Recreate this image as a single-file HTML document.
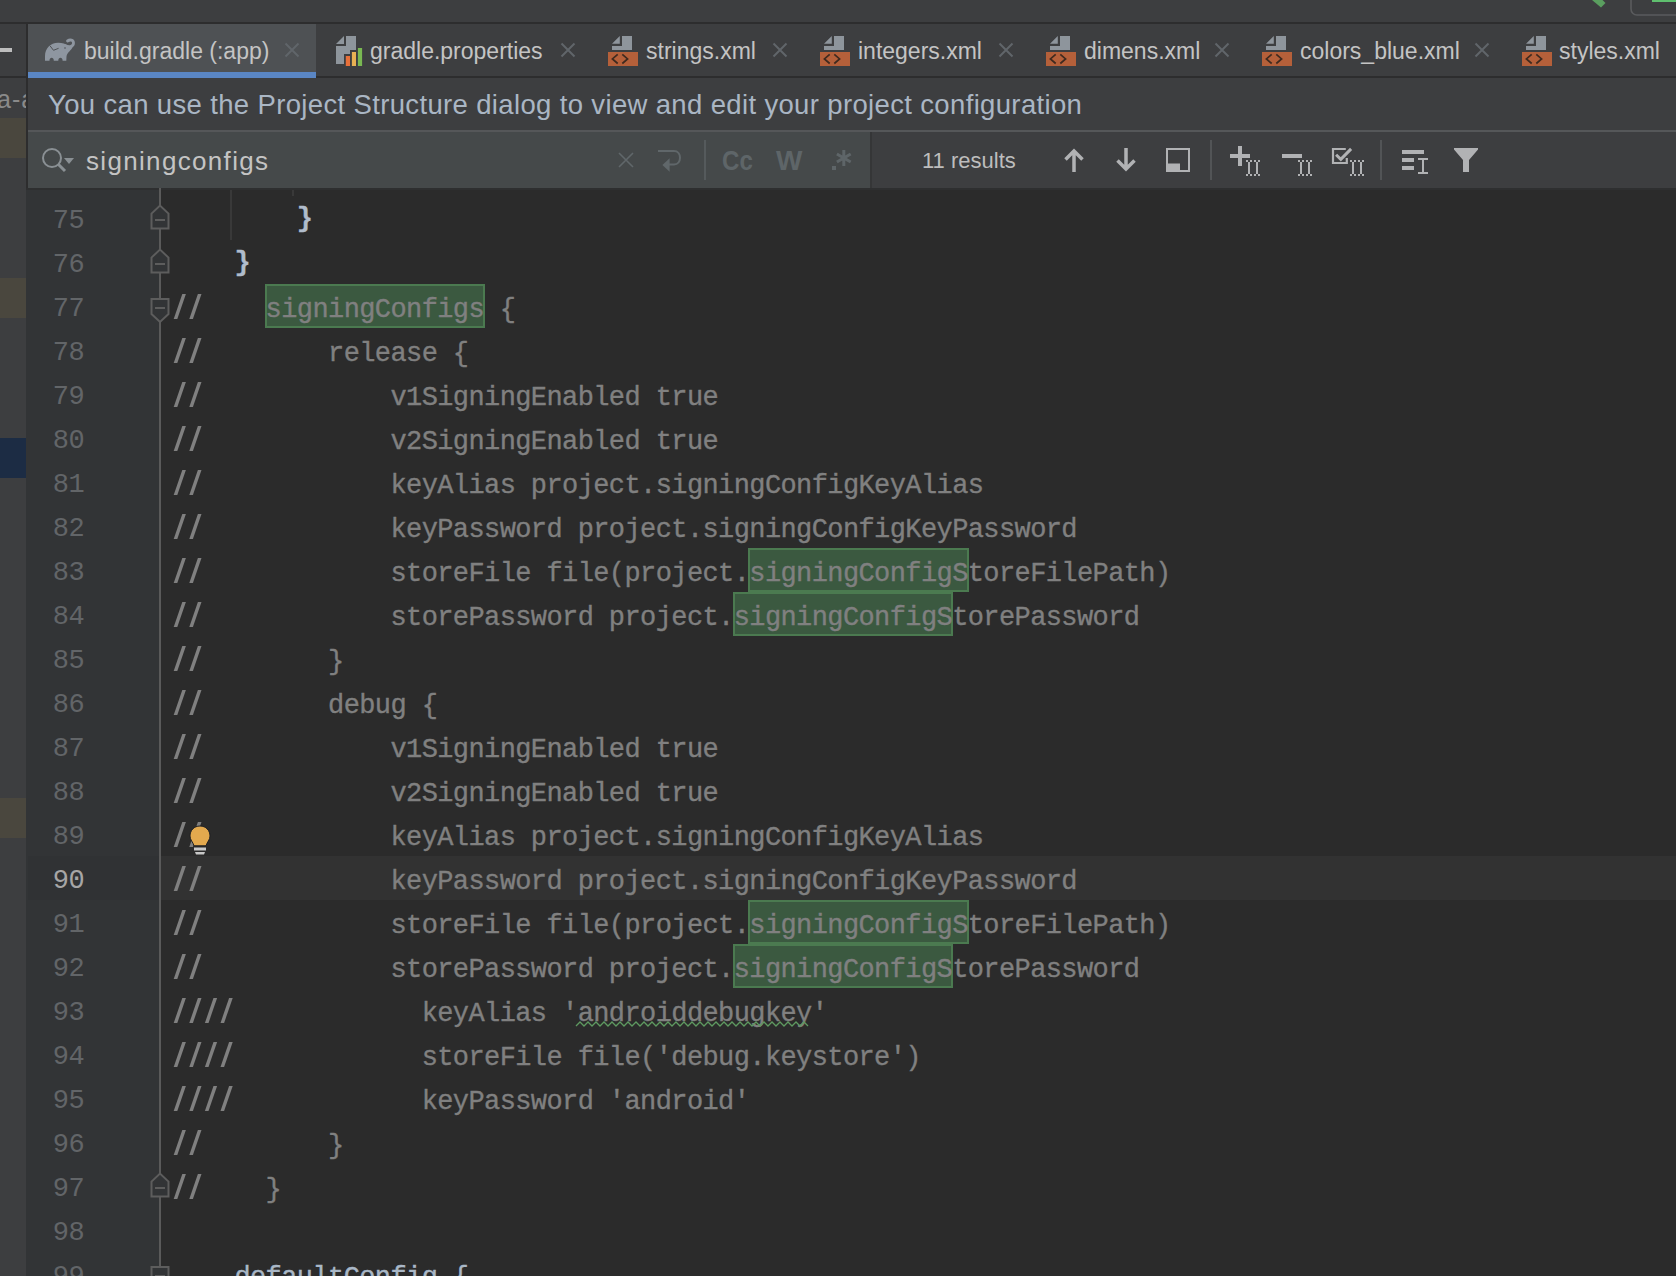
<!DOCTYPE html>
<html><head><meta charset="utf-8"><style>
*{margin:0;padding:0;box-sizing:border-box}
html,body{width:1676px;height:1276px;overflow:hidden;background:#2b2b2b;font-family:"Liberation Sans",sans-serif}
.a{position:absolute}
svg{position:absolute;overflow:visible}
.tt{position:absolute;top:37px;font-size:23px;line-height:28px;color:#c4c4c4;white-space:nowrap}
.ln{position:absolute;left:20px;width:64px;text-align:right;font-family:"Liberation Mono",monospace;font-size:27px;letter-spacing:-0.6px;line-height:44px;color:#626568;padding-top:3px;height:44px}
.ln.cur{color:#a6a6a6}
.code{position:absolute;left:172px;font-family:"Liberation Mono",monospace;font-size:27px;letter-spacing:-0.6px;line-height:44px;white-space:pre;color:#808080;padding-top:4px;height:44px;-webkit-text-stroke:0.35px currentColor}
.code.brace{color:#b0bccb;font-weight:bold;padding-top:1px}
.code.d{color:#a9b7c6}
.hl{position:absolute;height:44px;background:#3b5940;border:2px solid #4b7a50}
</style></head><body>
<div class="a" style="left:0px;top:0px;width:1676px;height:22px;background:#3d3e40;"></div>
<div class="a" style="left:0px;top:22px;width:1676px;height:2px;background:#2d2d2e;"></div>
<svg style="left:0;top:0" width="1676" height="24"><polygon points="1592,0 1601,7.5 1605.5,3 1602.5,0" fill="#5a9e5f"/><rect x="1631" y="-10" width="60" height="25" rx="6" fill="none" stroke="#5a5b5d" stroke-width="1.6"/><rect x="1652" y="-2" width="30" height="4" fill="#5fbf6f"/></svg>
<div class="a" style="left:0px;top:24px;width:26px;height:1252px;background:#3d3e40;"></div>
<div class="a" style="left:0px;top:76px;width:26px;height:2px;background:#2d2d2e;"></div>
<div class="a" style="left:0px;top:48px;width:12px;height:4px;background:#bdbdbd;"></div>
<div class="a" style="left:-3px;top:84px;font-size:25px;line-height:30px;color:#8a8a8a;white-space:nowrap;letter-spacing:1px">a-a</div>
<div class="a" style="left:0px;top:118px;width:26px;height:40px;background:#4a473e;"></div>
<div class="a" style="left:0px;top:278px;width:26px;height:40px;background:#4a473e;"></div>
<div class="a" style="left:0px;top:438px;width:26px;height:40px;background:#1c2c44;"></div>
<div class="a" style="left:0px;top:798px;width:26px;height:40px;background:#4a473e;"></div>
<div class="a" style="left:26px;top:24px;width:2px;height:164px;background:#2d2d2e;"></div>
<div class="a" style="left:28px;top:24px;width:1648px;height:52px;background:#3d3e40;"></div>
<div class="a" style="left:28px;top:76px;width:1648px;height:2px;background:#2d2d2e;"></div>
<div class="a" style="left:28px;top:24px;width:288px;height:54px;background:#4e5154;"></div>
<div class="a" style="left:28px;top:72px;width:288px;height:6px;background:#5a86c4;"></div>
<div class="tt" style="left:84px">build.gradle (:app)</div>
<div class="tt" style="left:370px">gradle.properties</div>
<div class="tt" style="left:646px">strings.xml</div>
<div class="tt" style="left:858px">integers.xml</div>
<div class="tt" style="left:1084px">dimens.xml</div>
<div class="tt" style="left:1300px">colors_blue.xml</div>
<div class="tt" style="left:1559px">styles.xml</div>
<svg style="left:284px;top:42px" width="16" height="16"><path d="M1.5,1.5 L14.5,14.5 M14.5,1.5 L1.5,14.5" stroke="#60656a" stroke-width="2" fill="none"/></svg>
<svg style="left:559.5px;top:42px" width="16" height="16"><path d="M1.5,1.5 L14.5,14.5 M14.5,1.5 L1.5,14.5" stroke="#60656a" stroke-width="2" fill="none"/></svg>
<svg style="left:772px;top:42px" width="16" height="16"><path d="M1.5,1.5 L14.5,14.5 M14.5,1.5 L1.5,14.5" stroke="#60656a" stroke-width="2" fill="none"/></svg>
<svg style="left:998px;top:42px" width="16" height="16"><path d="M1.5,1.5 L14.5,14.5 M14.5,1.5 L1.5,14.5" stroke="#60656a" stroke-width="2" fill="none"/></svg>
<svg style="left:1214px;top:42px" width="16" height="16"><path d="M1.5,1.5 L14.5,14.5 M14.5,1.5 L1.5,14.5" stroke="#60656a" stroke-width="2" fill="none"/></svg>
<svg style="left:1474px;top:42px" width="16" height="16"><path d="M1.5,1.5 L14.5,14.5 M14.5,1.5 L1.5,14.5" stroke="#60656a" stroke-width="2" fill="none"/></svg>
<svg style="left:40px;top:34px" width="40" height="32"><path fill="#8e96a0" d="M5,26.8 L5,22 C5,14.5 10.5,9 18,8.8 C22,8.7 25.5,10 28,11.8 L32.8,12.6 C31.5,16.5 27,18.5 26.5,22.5 L26.3,26.8 L22.6,26.8 C22.6,24.6 21.6,23.8 20.45,23.8 C19.3,23.8 18.3,24.6 18.3,26.8 L13.8,26.8 C13.8,24.6 12.8,23.8 11.65,23.8 C10.5,23.8 9.5,24.6 9.5,26.8 Z"/><path d="M25,11.5 C29.5,13.5 33.5,12.5 33.5,9 C33.5,5.8 30,5.2 27.5,7" stroke="#8e96a0" stroke-width="2.8" fill="none" stroke-linecap="round"/><path d="M10,11.8 L13.5,16.3 L18.6,14.3" stroke="#4e5154" stroke-width="1" fill="none"/><circle cx="25" cy="14" r="0.8" fill="#4e5154"/></svg>
<svg style="left:330px;top:30px" width="40" height="40"><path fill="#8e959c" d="M6,14 L14,6 L14,14 Z M16,6 L26,6 L26,20 L20,20 L20,24 L14,24 L14,34 L6,34 L6,16 L16,16 Z"/><rect x="15.8" y="26" width="4.2" height="10" fill="#e8703a"/><rect x="21.9" y="22" width="4.1" height="14" fill="#e8b153"/><rect x="27.9" y="18" width="4.2" height="18" fill="#79b852"/></svg>
<svg style="left:604px;top:32px" width="40" height="40"><path fill="#8e959c" d="M8,11.8 L15.8,4 L15.8,11.8 Z M18,4 L28,4 L28,18 L8,18 L8,14 L18,14 Z"/><rect x="4" y="20" width="30" height="14" fill="#b5603a"/><path d="M13.7,22.3 L8.4,26.9 L13.7,31.5 M18.3,22.3 L23.6,26.9 L18.3,31.5" stroke="#3f2a1f" stroke-width="1.7" fill="none"/></svg>
<svg style="left:816px;top:32px" width="40" height="40"><path fill="#8e959c" d="M8,11.8 L15.8,4 L15.8,11.8 Z M18,4 L28,4 L28,18 L8,18 L8,14 L18,14 Z"/><rect x="4" y="20" width="30" height="14" fill="#b5603a"/><path d="M13.7,22.3 L8.4,26.9 L13.7,31.5 M18.3,22.3 L23.6,26.9 L18.3,31.5" stroke="#3f2a1f" stroke-width="1.7" fill="none"/></svg>
<svg style="left:1042px;top:32px" width="40" height="40"><path fill="#8e959c" d="M8,11.8 L15.8,4 L15.8,11.8 Z M18,4 L28,4 L28,18 L8,18 L8,14 L18,14 Z"/><rect x="4" y="20" width="30" height="14" fill="#b5603a"/><path d="M13.7,22.3 L8.4,26.9 L13.7,31.5 M18.3,22.3 L23.6,26.9 L18.3,31.5" stroke="#3f2a1f" stroke-width="1.7" fill="none"/></svg>
<svg style="left:1258px;top:32px" width="40" height="40"><path fill="#8e959c" d="M8,11.8 L15.8,4 L15.8,11.8 Z M18,4 L28,4 L28,18 L8,18 L8,14 L18,14 Z"/><rect x="4" y="20" width="30" height="14" fill="#b5603a"/><path d="M13.7,22.3 L8.4,26.9 L13.7,31.5 M18.3,22.3 L23.6,26.9 L18.3,31.5" stroke="#3f2a1f" stroke-width="1.7" fill="none"/></svg>
<svg style="left:1518px;top:32px" width="40" height="40"><path fill="#8e959c" d="M8,11.8 L15.8,4 L15.8,11.8 Z M18,4 L28,4 L28,18 L8,18 L8,14 L18,14 Z"/><rect x="4" y="20" width="30" height="14" fill="#b5603a"/><path d="M13.7,22.3 L8.4,26.9 L13.7,31.5 M18.3,22.3 L23.6,26.9 L18.3,31.5" stroke="#3f2a1f" stroke-width="1.7" fill="none"/></svg>
<div class="a" style="left:28px;top:78px;width:1648px;height:52px;background:#3d3e40;"></div>
<div class="a" style="left:48px;top:89px;font-size:27.5px;line-height:32px;color:#aab6c4;letter-spacing:0.35px;white-space:nowrap">You can use the Project Structure dialog to view and edit your project configuration</div>
<div class="a" style="left:28px;top:130px;width:1648px;height:2px;background:#555759;"></div>
<div class="a" style="left:28px;top:132px;width:842px;height:56px;background:#45494a;"></div>
<div class="a" style="left:870px;top:132px;width:2px;height:56px;background:#353637;"></div>
<div class="a" style="left:872px;top:132px;width:804px;height:56px;background:#3d3e40;"></div>
<svg style="left:28px;top:132px" width="60" height="56"><circle cx="24" cy="26" r="9" stroke="#8a9094" stroke-width="2" fill="none"/><path d="M30.5,32.5 L37,39" stroke="#8a9094" stroke-width="3" fill="none"/><path d="M36,26 L46,26 L41,32 Z" fill="#8a9094"/></svg>
<div class="a" style="left:86px;top:145px;font-size:26px;line-height:32px;color:#c4c4c4;letter-spacing:1.33px;white-space:nowrap">signingconfigs</div>
<svg style="left:610px;top:140px" width="80" height="40"><path d="M9,13 L23,27 M23,13 L9,27" stroke="#60676a" stroke-width="1.6" fill="none"/><path d="M48,11 L64,11 C72,11 72,24.5 64,24.5 L59,24.5" stroke="#60676a" stroke-width="2" fill="none"/><path d="M59.6,18.3 L52.4,25 L59.6,31.7 Z" fill="#60676a"/></svg>
<div class="a" style="left:704px;top:140px;width:2px;height:40px;background:#555a5c;"></div>
<div class="a" style="left:722px;top:146px;font-size:28px;line-height:30px;font-weight:bold;color:#5e6568;white-space:nowrap;transform:scaleX(0.86);transform-origin:0 0">Cc</div>
<div class="a" style="left:776px;top:146px;font-size:28px;line-height:30px;font-weight:bold;color:#5e6568;white-space:nowrap">W</div>
<svg style="left:820px;top:140px" width="40" height="40"><rect x="12" y="26" width="4" height="4" fill="#5e6568"/><path d="M23.8,10 L23.8,26 M16.9,14 L30.7,22 M16.9,22 L30.7,14" stroke="#5e6568" stroke-width="3" fill="none"/></svg>
<div class="a" style="left:922px;top:147px;font-size:22px;line-height:28px;color:#bdbdbd;white-space:nowrap">11 results</div>
<svg style="left:1050px;top:140px" width="160" height="40"><path d="M24,11 L24,32 M15.5,19.5 L24,11 L32.5,19.5" stroke="#b1b2b4" stroke-width="3.5" fill="none"/><path d="M76,8 L76,29 M67.5,20.5 L76,29 L84.5,20.5" stroke="#b1b2b4" stroke-width="3.5" fill="none"/><rect x="117" y="9" width="22" height="22" stroke="#b1b2b4" stroke-width="2" fill="none"/><rect x="117" y="23.5" width="13" height="7.5" fill="#b1b2b4"/></svg>
<div class="a" style="left:1210px;top:140px;width:2px;height:40px;background:#525456;"></div>
<svg style="left:1200px;top:128px" width="300" height="64"><path d="M30,28 L50,28 M40,18 L40,38" stroke="#b1b2b4" stroke-width="4" fill="none"/><rect x="46" y="32" width="2" height="2" fill="#b1b2b4"/><rect x="46" y="46" width="2" height="2" fill="#b1b2b4"/><rect x="50" y="32" width="2" height="2" fill="#b1b2b4"/><rect x="50" y="46" width="2" height="2" fill="#b1b2b4"/><rect x="48" y="34" width="2" height="12" fill="#b1b2b4"/><rect x="54" y="32" width="2" height="2" fill="#b1b2b4"/><rect x="54" y="46" width="2" height="2" fill="#b1b2b4"/><rect x="58" y="32" width="2" height="2" fill="#b1b2b4"/><rect x="58" y="46" width="2" height="2" fill="#b1b2b4"/><rect x="56" y="34" width="2" height="12" fill="#b1b2b4"/><path d="M82,28 L102,28" stroke="#b1b2b4" stroke-width="4" fill="none"/><rect x="98" y="32" width="2" height="2" fill="#b1b2b4"/><rect x="98" y="46" width="2" height="2" fill="#b1b2b4"/><rect x="102" y="32" width="2" height="2" fill="#b1b2b4"/><rect x="102" y="46" width="2" height="2" fill="#b1b2b4"/><rect x="100" y="34" width="2" height="12" fill="#b1b2b4"/><rect x="106" y="32" width="2" height="2" fill="#b1b2b4"/><rect x="106" y="46" width="2" height="2" fill="#b1b2b4"/><rect x="110" y="32" width="2" height="2" fill="#b1b2b4"/><rect x="110" y="46" width="2" height="2" fill="#b1b2b4"/><rect x="108" y="34" width="2" height="12" fill="#b1b2b4"/><path d="M145.8,21 L133,21 L133,35 L146.8,35 L146.8,30" stroke="#b1b2b4" stroke-width="2.2" fill="none"/><path d="M136.1,26.7 L140.8,31.3 L151.1,20.9" stroke="#b1b2b4" stroke-width="3" fill="none"/><rect x="150" y="32" width="2" height="2" fill="#b1b2b4"/><rect x="150" y="46" width="2" height="2" fill="#b1b2b4"/><rect x="154" y="32" width="2" height="2" fill="#b1b2b4"/><rect x="154" y="46" width="2" height="2" fill="#b1b2b4"/><rect x="152" y="34" width="2" height="12" fill="#b1b2b4"/><rect x="158" y="32" width="2" height="2" fill="#b1b2b4"/><rect x="158" y="46" width="2" height="2" fill="#b1b2b4"/><rect x="162" y="32" width="2" height="2" fill="#b1b2b4"/><rect x="162" y="46" width="2" height="2" fill="#b1b2b4"/><rect x="160" y="34" width="2" height="12" fill="#b1b2b4"/><rect x="202" y="22" width="22" height="4" fill="#b1b2b4"/><rect x="202" y="30" width="12" height="4" fill="#b1b2b4"/><rect x="202" y="38" width="12" height="4" fill="#b1b2b4"/><rect x="218" y="30" width="10" height="2" fill="#b1b2b4"/><rect x="222" y="32" width="2" height="12" fill="#b1b2b4"/><rect x="218" y="44" width="10" height="2" fill="#b1b2b4"/><path d="M254,20 L278,20 L278,21.5 L269,32 L269,44 L263,44 L263,32 L254,21.5 Z" fill="#b1b2b4"/></svg>
<div class="a" style="left:1380px;top:140px;width:2px;height:40px;background:#525456;"></div>
<div class="a" style="left:26px;top:188px;width:135px;height:1088px;background:#323436;"></div>
<div class="a" style="left:161px;top:188px;width:1515px;height:1088px;background:#2b2b2b;"></div>
<div class="a" style="left:26px;top:188px;width:1650px;height:2px;background:#2e2f30;"></div>
<div class="a" style="left:28px;top:856px;width:133px;height:44px;background:#303234;"></div>
<div class="a" style="left:161px;top:856px;width:1515px;height:44px;background:#323232;"></div>
<div class="a" style="left:230px;top:190px;width:2px;height:50px;background:#393939;"></div>
<div class="a" style="left:292px;top:190px;width:2px;height:6px;background:#393939;"></div>
<div class="a" style="left:159px;top:188px;width:2px;height:1088px;background:#5a5a5a;"></div>
<div class="ln" style="top:196px">75</div>
<div class="code brace" style="top:196px">        }</div>
<div class="ln" style="top:240px">76</div>
<div class="code brace" style="top:240px">    }</div>
<div class="ln" style="top:284px">77</div>
<div class="hl" style="top:284px;left:264.6px;width:220.4px"></div>
<div class="code c" style="top:284px">      signingConfigs {</div>
<div class="ln" style="top:328px">78</div>
<div class="code c" style="top:328px">          release {</div>
<div class="ln" style="top:372px">79</div>
<div class="code c" style="top:372px">              v1SigningEnabled true</div>
<div class="ln" style="top:416px">80</div>
<div class="code c" style="top:416px">              v2SigningEnabled true</div>
<div class="ln" style="top:460px">81</div>
<div class="code c" style="top:460px">              keyAlias project.signingConfigKeyAlias</div>
<div class="ln" style="top:504px">82</div>
<div class="code c" style="top:504px">              keyPassword project.signingConfigKeyPassword</div>
<div class="ln" style="top:548px">83</div>
<div class="hl" style="top:548px;left:748.2px;width:220.4px"></div>
<div class="code c" style="top:548px">              storeFile file(project.signingConfigStoreFilePath)</div>
<div class="ln" style="top:592px">84</div>
<div class="hl" style="top:592px;left:732.6px;width:220.4px"></div>
<div class="code c" style="top:592px">              storePassword project.signingConfigStorePassword</div>
<div class="ln" style="top:636px">85</div>
<div class="code c" style="top:636px">          }</div>
<div class="ln" style="top:680px">86</div>
<div class="code c" style="top:680px">          debug {</div>
<div class="ln" style="top:724px">87</div>
<div class="code c" style="top:724px">              v1SigningEnabled true</div>
<div class="ln" style="top:768px">88</div>
<div class="code c" style="top:768px">              v2SigningEnabled true</div>
<div class="ln" style="top:812px">89</div>
<div class="code c" style="top:812px">              keyAlias project.signingConfigKeyAlias</div>
<div class="ln cur" style="top:856px">90</div>
<div class="code c" style="top:856px">              keyPassword project.signingConfigKeyPassword</div>
<div class="ln" style="top:900px">91</div>
<div class="hl" style="top:900px;left:748.2px;width:220.4px"></div>
<div class="code c" style="top:900px">              storeFile file(project.signingConfigStoreFilePath)</div>
<div class="ln" style="top:944px">92</div>
<div class="hl" style="top:944px;left:732.6px;width:220.4px"></div>
<div class="code c" style="top:944px">              storePassword project.signingConfigStorePassword</div>
<div class="ln" style="top:988px">93</div>
<div class="code c" style="top:988px">                keyAlias &#x27;androiddebugkey&#x27;</div>
<div class="ln" style="top:1032px">94</div>
<div class="code c" style="top:1032px">                storeFile file(&#x27;debug.keystore&#x27;)</div>
<div class="ln" style="top:1076px">95</div>
<div class="code c" style="top:1076px">                keyPassword &#x27;android&#x27;</div>
<div class="ln" style="top:1120px">96</div>
<div class="code c" style="top:1120px">          }</div>
<div class="ln" style="top:1164px">97</div>
<div class="code c" style="top:1164px">      }</div>
<div class="ln" style="top:1208px">98</div>
<div class="code c" style="top:1208px"></div>
<div class="ln" style="top:1252px">99</div>
<div class="code d" style="top:1252px">    defaultConfig {</div>
<svg style="left:0;top:0" width="1676" height="1276" fill="#808080"><polygon points="173.7,319 177.3,319 185.9,294 182.3,294"/><polygon points="189.3,319 192.9,319 201.5,294 197.9,294"/><polygon points="173.7,363 177.3,363 185.9,338 182.3,338"/><polygon points="189.3,363 192.9,363 201.5,338 197.9,338"/><polygon points="173.7,407 177.3,407 185.9,382 182.3,382"/><polygon points="189.3,407 192.9,407 201.5,382 197.9,382"/><polygon points="173.7,451 177.3,451 185.9,426 182.3,426"/><polygon points="189.3,451 192.9,451 201.5,426 197.9,426"/><polygon points="173.7,495 177.3,495 185.9,470 182.3,470"/><polygon points="189.3,495 192.9,495 201.5,470 197.9,470"/><polygon points="173.7,539 177.3,539 185.9,514 182.3,514"/><polygon points="189.3,539 192.9,539 201.5,514 197.9,514"/><polygon points="173.7,583 177.3,583 185.9,558 182.3,558"/><polygon points="189.3,583 192.9,583 201.5,558 197.9,558"/><polygon points="173.7,627 177.3,627 185.9,602 182.3,602"/><polygon points="189.3,627 192.9,627 201.5,602 197.9,602"/><polygon points="173.7,671 177.3,671 185.9,646 182.3,646"/><polygon points="189.3,671 192.9,671 201.5,646 197.9,646"/><polygon points="173.7,715 177.3,715 185.9,690 182.3,690"/><polygon points="189.3,715 192.9,715 201.5,690 197.9,690"/><polygon points="173.7,759 177.3,759 185.9,734 182.3,734"/><polygon points="189.3,759 192.9,759 201.5,734 197.9,734"/><polygon points="173.7,803 177.3,803 185.9,778 182.3,778"/><polygon points="189.3,803 192.9,803 201.5,778 197.9,778"/><polygon points="173.7,847 177.3,847 185.9,822 182.3,822"/><polygon points="189.3,847 192.9,847 201.5,822 197.9,822"/><polygon points="173.7,891 177.3,891 185.9,866 182.3,866"/><polygon points="189.3,891 192.9,891 201.5,866 197.9,866"/><polygon points="173.7,935 177.3,935 185.9,910 182.3,910"/><polygon points="189.3,935 192.9,935 201.5,910 197.9,910"/><polygon points="173.7,979 177.3,979 185.9,954 182.3,954"/><polygon points="189.3,979 192.9,979 201.5,954 197.9,954"/><polygon points="173.7,1023 177.3,1023 185.9,998 182.3,998"/><polygon points="189.3,1023 192.9,1023 201.5,998 197.9,998"/><polygon points="204.9,1023 208.5,1023 217.1,998 213.5,998"/><polygon points="220.5,1023 224.1,1023 232.7,998 229.1,998"/><polygon points="173.7,1067 177.3,1067 185.9,1042 182.3,1042"/><polygon points="189.3,1067 192.9,1067 201.5,1042 197.9,1042"/><polygon points="204.9,1067 208.5,1067 217.1,1042 213.5,1042"/><polygon points="220.5,1067 224.1,1067 232.7,1042 229.1,1042"/><polygon points="173.7,1111 177.3,1111 185.9,1086 182.3,1086"/><polygon points="189.3,1111 192.9,1111 201.5,1086 197.9,1086"/><polygon points="204.9,1111 208.5,1111 217.1,1086 213.5,1086"/><polygon points="220.5,1111 224.1,1111 232.7,1086 229.1,1086"/><polygon points="173.7,1155 177.3,1155 185.9,1130 182.3,1130"/><polygon points="189.3,1155 192.9,1155 201.5,1130 197.9,1130"/><polygon points="173.7,1199 177.3,1199 185.9,1174 182.3,1174"/><polygon points="189.3,1199 192.9,1199 201.5,1174 197.9,1174"/></svg>
<svg style="left:148px;top:196px" width="24" height="44"><path d="M3.5,32.5 L3.5,17.6 L12,9.6 L20.5,17.6 L20.5,32.5 Z" fill="#323436" stroke="#5d5d5d" stroke-width="2"/><path d="M7,24 L17,24" stroke="#5d5d5d" stroke-width="2"/></svg>
<svg style="left:148px;top:240px" width="24" height="44"><path d="M3.5,32.5 L3.5,17.6 L12,9.6 L20.5,17.6 L20.5,32.5 Z" fill="#323436" stroke="#5d5d5d" stroke-width="2"/><path d="M7,24 L17,24" stroke="#5d5d5d" stroke-width="2"/></svg>
<svg style="left:148px;top:284px" width="24" height="50"><path d="M3.5,15 L20.5,15 L20.5,30 L12,38 L3.5,30 Z" fill="#323436" stroke="#5d5d5d" stroke-width="2"/><path d="M7,24 L17,24" stroke="#5d5d5d" stroke-width="2"/></svg>
<svg style="left:148px;top:1164px" width="24" height="44"><path d="M3.5,32.5 L3.5,17.6 L12,9.6 L20.5,17.6 L20.5,32.5 Z" fill="#323436" stroke="#5d5d5d" stroke-width="2"/><path d="M7,24 L17,24" stroke="#5d5d5d" stroke-width="2"/></svg>
<svg style="left:148px;top:1252px" width="24" height="50"><path d="M3.5,15 L20.5,15 L20.5,30 L12,38 L3.5,30 Z" fill="#323436" stroke="#5d5d5d" stroke-width="2"/><path d="M7,24 L17,24" stroke="#5d5d5d" stroke-width="2"/></svg>
<svg style="left:168px;top:816px" width="50" height="44"><path d="M26,29.8 C25,26 22,24 22,20 C22,14.5 26,10 32,10 C38,10 42,14.5 42,20 C42,24 39,26 38,29.8 Z" fill="#e3a94e" stroke="#1e1f22" stroke-width="1"/><rect x="26" y="31.5" width="12" height="3" fill="#c8c8c8"/><path d="M27,36 L37,36 L36,38.5 L28,38.5 Z" fill="#c8c8c8"/></svg>
<svg style="left:0;top:0" width="1676" height="1276"><polyline points="576.0,1026 580.0,1022 584.0,1026 588.0,1022 592.0,1026 596.0,1022 600.0,1026 604.0,1022 608.0,1026 612.0,1022 616.0,1026 620.0,1022 624.0,1026 628.0,1022 632.0,1026 636.0,1022 640.0,1026 644.0,1022 648.0,1026 652.0,1022 656.0,1026 660.0,1022 664.0,1026 668.0,1022 672.0,1026 676.0,1022 680.0,1026 684.0,1022 688.0,1026 692.0,1022 696.0,1026 700.0,1022 704.0,1026 708.0,1022 712.0,1026 716.0,1022 720.0,1026 724.0,1022 728.0,1026 732.0,1022 736.0,1026 740.0,1022 744.0,1026 748.0,1022 752.0,1026 756.0,1022 760.0,1026 764.0,1022 768.0,1026 772.0,1022 776.0,1026 780.0,1022 784.0,1026 788.0,1022 792.0,1026 796.0,1022 800.0,1026 804.0,1022 808.0,1026" stroke="#5e9960" stroke-width="1.3" fill="none"/></svg>
</body></html>
